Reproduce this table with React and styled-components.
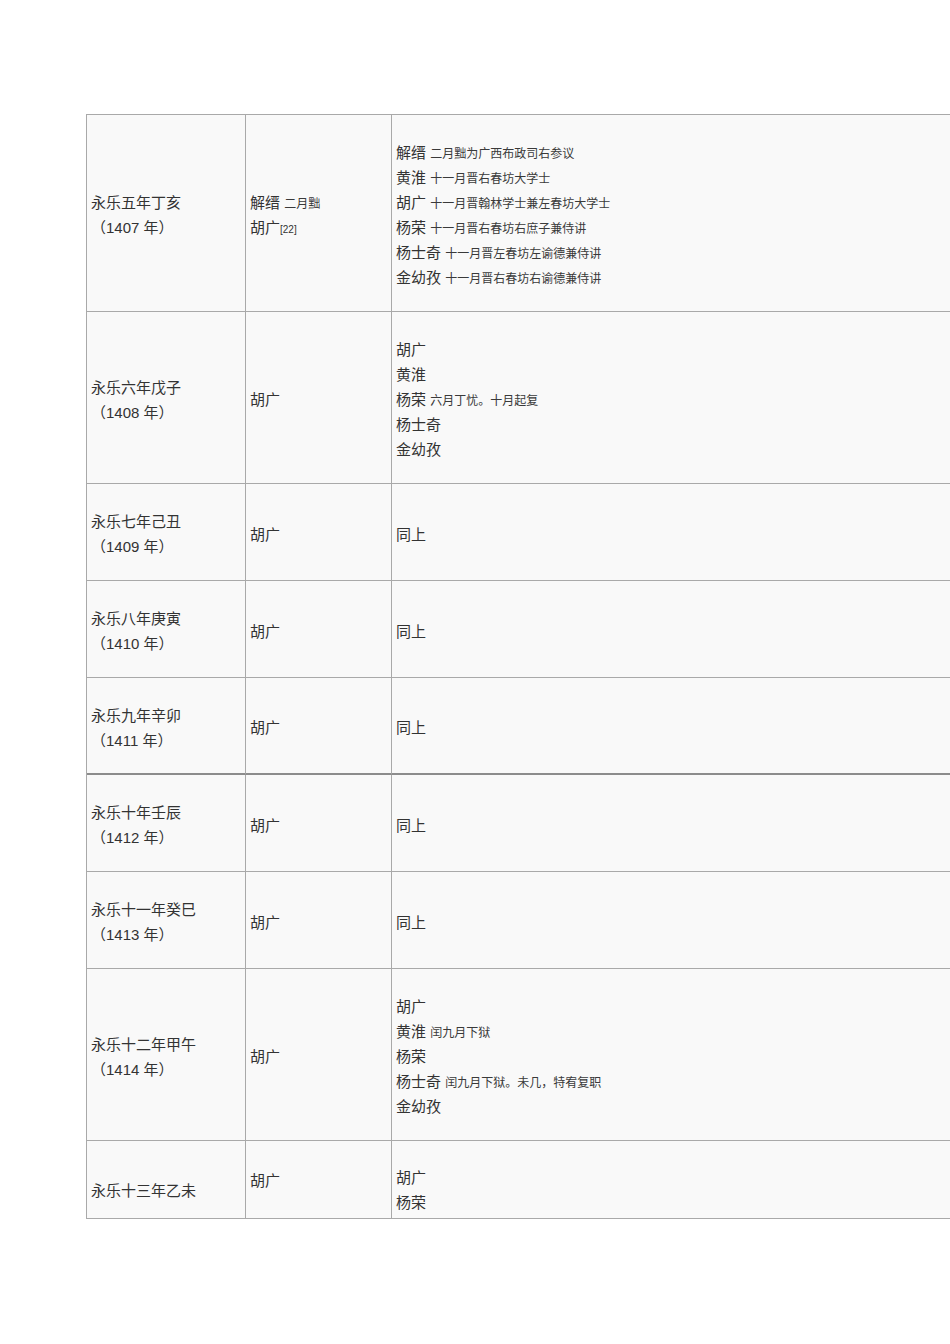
import React from 'react';
import styled, { createGlobalStyle } from 'styled-components';

const GlobalStyle = createGlobalStyle`
  html, body {
    margin: 0;
    padding: 0;
    background: #ffffff;
    overflow-x: hidden;
  }
  body {
    font-family: "Liberation Sans", "Noto Sans CJK SC", sans-serif;
    color: #333;
  }
`;

const ROWS = [
    {
        year: '永乐五年丁亥', ad: '1407', h: 197,
        grand: [{ n: '解缙', note: '二月黜' }, { n: '胡广', ref: '[22]' }],
        members: [
            { n: '解缙', note: '二月黜为广西布政司右参议' },
            { n: '黄淮', note: '十一月晋右春坊大学士' },
            { n: '胡广', note: '十一月晋翰林学士兼左春坊大学士' },
            { n: '杨荣', note: '十一月晋右春坊右庶子兼侍讲' },
            { n: '杨士奇', note: '十一月晋左春坊左谕德兼侍讲' },
            { n: '金幼孜', note: '十一月晋右春坊右谕德兼侍讲' },
        ],
    },
    {
        year: '永乐六年戊子', ad: '1408', h: 172,
        grand: [{ n: '胡广' }],
        members: [
            { n: '胡广' },
            { n: '黄淮' },
            { n: '杨荣', note: '六月丁忧。十月起复' },
            { n: '杨士奇' },
            { n: '金幼孜' },
        ],
    },
    { year: '永乐七年己丑', ad: '1409', h: 97, grand: [{ n: '胡广' }], members: [{ n: '同上' }] },
    { year: '永乐八年庚寅', ad: '1410', h: 97, grand: [{ n: '胡广' }], members: [{ n: '同上' }] },
    { year: '永乐九年辛卯', ad: '1411', h: 97, grand: [{ n: '胡广' }], members: [{ n: '同上' }], heavy: true },
    { year: '永乐十年壬辰', ad: '1412', h: 97, grand: [{ n: '胡广' }], members: [{ n: '同上' }] },
    { year: '永乐十一年癸巳', ad: '1413', h: 97, grand: [{ n: '胡广' }], members: [{ n: '同上' }] },
    {
        year: '永乐十二年甲午', ad: '1414', h: 172,
        grand: [{ n: '胡广' }],
        members: [
            { n: '胡广' },
            { n: '黄淮', note: '闰九月下狱' },
            { n: '杨荣' },
            { n: '杨士奇', note: '闰九月下狱。未几，特宥复职' },
            { n: '金幼孜' },
        ],
    },
    {
        year: '永乐十三年乙未', h: 78, pt: [21, 1, 21],
        grand: [{ n: '胡广' }],
        members: [{ n: '胡广' }, { n: '杨荣' }],
    },
];

export default function App() {
    return (
        <>
            <GlobalStyle />
            <Page>
                <Table>
                    {ROWS.map((row, i) => {
                        const pt = row.pt || [4, 4, 4];
                        return (
                            <React.Fragment key={i}>
                                <Cell $h={row.h} $pt={pt[0]} $heavy={row.heavy}>
                                    <Line>{row.year}</Line>
                                    {row.ad && <Line>（{row.ad} 年）</Line>}
                                </Cell>
                                <Cell $h={row.h} $pt={pt[1]} $heavy={row.heavy}>
                                    {row.grand.map((g, j) => (
                                        <Line key={j}>
                                            {g.n}
                                            {g.note && <> <Note>{g.note}</Note></>}
                                            {g.ref && <Ref>{g.ref}</Ref>}
                                        </Line>
                                    ))}
                                </Cell>
                                <Cell $h={row.h} $pt={pt[2]} $heavy={row.heavy} $last>
                                    {row.members.map((m, j) => (
                                        <Line key={j}>
                                            {m.n}
                                            {m.note && <> <Note>{m.note}</Note></>}
                                        </Line>
                                    ))}
                                </Cell>
                            </React.Fragment>
                        );
                    })}
                </Table>
            </Page>
        </>
    );
}

const Page = styled.div`
    padding: 114px 0 0 86px;
    height: 1230px;
    box-sizing: border-box;
`;

const Table = styled.div`
    display: grid;
    grid-template-columns: 159px 146px 1fr;
    border-top: 1px solid #a9a9a9;
    border-left: 1px solid #a9a9a9;
    background: #f9f9f9;
`;

const Cell = styled.div`
    box-sizing: border-box;
    height: ${p => p.$h}px;
    display: flex;
    flex-direction: column;
    justify-content: center;
    padding: ${p => p.$pt}px 4px 0 4px;
    border-right: ${p => (p.$last ? 'none' : '1px solid #a9a9a9')};
    border-bottom: ${p => (p.$heavy ? '2px solid #8c8c8c' : '1px solid #a9a9a9')};
    font-size: 15px;
    color: #333;
    white-space: nowrap;
`;

const Line = styled.div`
    height: 25px;
    line-height: 25px;
    flex: none;
`;

const Note = styled.span`
    font-size: 12px;
    line-height: 1;
    color: #3a3a3a;
`;

const Ref = styled.span`
    font-family: "Liberation Sans", sans-serif;
    font-size: 10px;
    line-height: 1;
    color: #333;
`;
